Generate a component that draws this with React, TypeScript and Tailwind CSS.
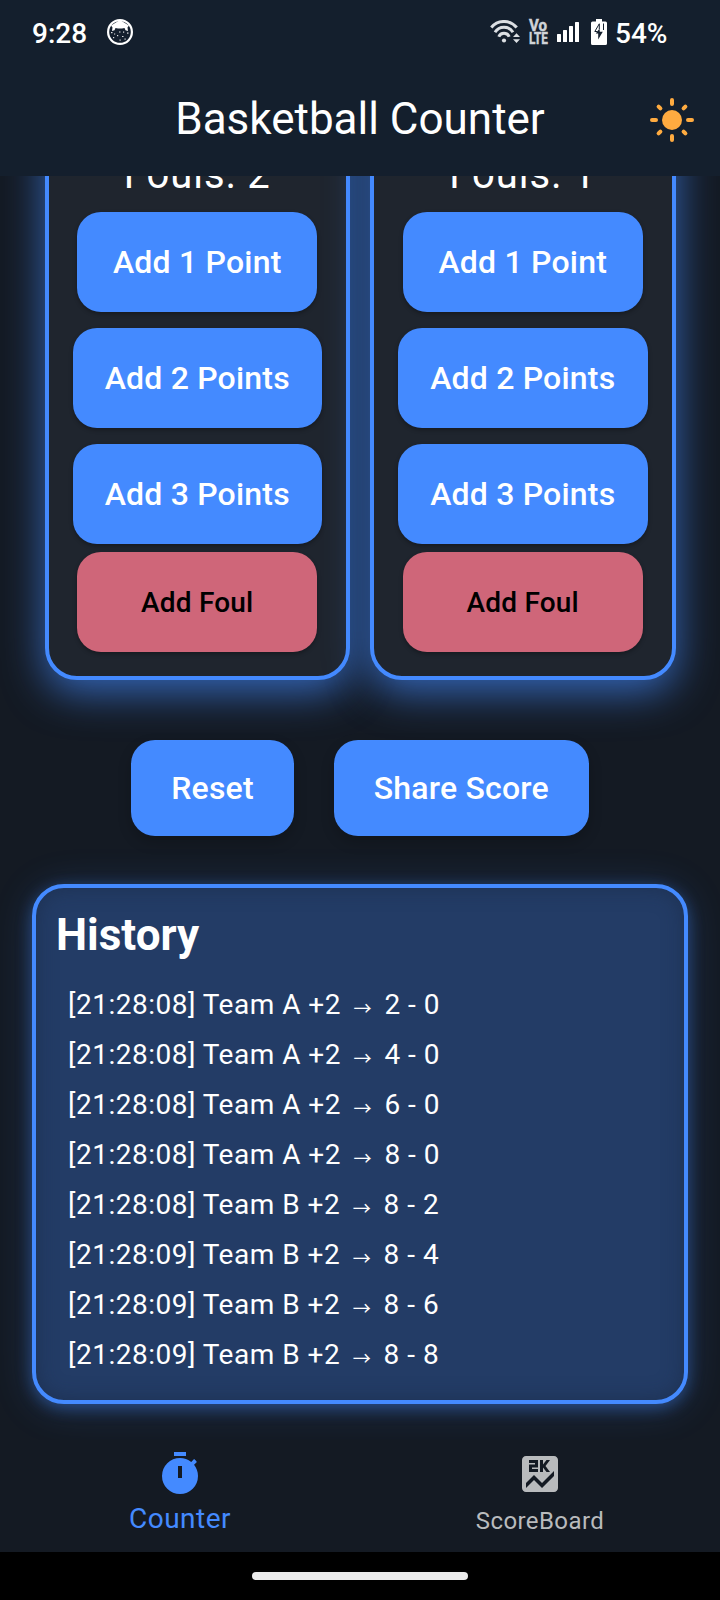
import type { ReactNode } from "react";

const history = [
  ["[21:28:08] Team A +2", "2 - 0"],
  ["[21:28:08] Team A +2", "4 - 0"],
  ["[21:28:08] Team A +2", "6 - 0"],
  ["[21:28:08] Team A +2", "8 - 0"],
  ["[21:28:08] Team B +2", "8 - 2"],
  ["[21:28:09] Team B +2", "8 - 4"],
  ["[21:28:09] Team B +2", "8 - 6"],
  ["[21:28:09] Team B +2", "8 - 8"],
];

function NotificationIcon() {
  return (
    <svg className="ml-[21px] h-[26px] w-[26px]" viewBox="0 0 26 26">
      <circle cx="13" cy="13" r="11.9" fill="none" stroke="#fff" strokeWidth="2.2" />
      <path
        d="M4 6.500 13 1l9 5.500-1.500 2 .5 3.500-2.500-.8-1-2.200-2.500.5h-4l-2.500-.5-1 2.200-2.500.8.5-3.500z"
        fill="#fff"
      />
      <g fill="#fff" fillOpacity=".85">
        <rect x="4" y="13" width="1.500" height="1.200" />
        <rect x="7" y="14.500" width="1.200" height="1" />
        <rect x="12" y="12.500" width="1.500" height="1" />
        <rect x="16" y="12.500" width="1.200" height="1.200" />
        <rect x="20" y="13.500" width="1.500" height="1.200" />
        <rect x="10" y="16" width="1.200" height="1.200" />
        <rect x="15" y="17" width="1.500" height="1" />
        <rect x="6" y="18" width="1.200" height="1.200" />
        <rect x="12.500" y="20.500" width="1.200" height="1.200" />
        <rect x="17.500" y="19.500" width="1.200" height="1.200" />
      </g>
    </svg>
  );
}

function WifiIcon() {
  return (
    <svg className="h-[24px] w-[30px]" viewBox="0 0 30 24">
      <g fill="none" stroke="#dcdfe3" strokeWidth="3">
        <path d="M1.300 7.500a16.400 16.400 0 0 1 25.400 0" />
        <path d="M5 12.200a10.600 10.600 0 0 1 18 0" />
        <path d="M8.800 16.700a5.600 5.600 0 0 1 10.400 0" />
      </g>
      <circle cx="14" cy="20.500" r="2.100" fill="#dcdfe3" />
      <path d="M23 17 26.500 13.200 30 17zM23 19.300h7l-3.500 3.700z" fill="#dcdfe3" />
    </svg>
  );
}

function StatusBar() {
  return (
    <div className="flex h-16 items-center pl-8">
      <span className="w-[54px] pt-[3px] text-[28px] leading-[32px] font-medium">9:28</span>
      <NotificationIcon />
      <div className="ml-auto flex h-[26px] w-[230px] items-center">
        <WifiIcon />
        <svg
          className="ml-[9px] h-[26px] w-[19px] overflow-visible"
          viewBox="0 0 19 26"
          fill="#d0d3d7"
          stroke="#d0d3d7"
          strokeWidth=".5"
          fontSize="16.500"
          fontWeight="700"
        >
          <text x="0" y="12" textLength="18" lengthAdjust="spacingAndGlyphs">
            Vo
          </text>
          <text x="0" y="25.200" textLength="19" lengthAdjust="spacingAndGlyphs">
            LTE
          </text>
        </svg>
        <svg className="ml-[9px] h-5 w-[22px]" viewBox="0 0 22 20" fill="#fff">
          <rect x="0" y="12" width="4" height="8" rx=".5" />
          <rect x="6" y="8" width="4" height="12" rx=".5" />
          <rect x="12" y="4" width="4" height="16" rx=".5" />
          <rect x="18" y="0" width="4" height="20" rx=".5" />
        </svg>
        <svg className="ml-[12px] h-[26px] w-4" viewBox="0 0 16 26">
          <path d="M5 0h6v2.500h3.500A1.500 1.500 0 0 1 16 4v20.500a1.500 1.500 0 0 1-1.500 1.500h-13A1.500 1.500 0 0 1 0 24.500V4a1.500 1.500 0 0 1 1.500-1.500H5z" fill="#fff" />
          <path d="M6.500 12.500H3.800L8.300 4.800V10M12.500 4.500V11" fill="none" stroke="#141f2d" strokeWidth="1" />
          <path d="M8.500 9.500 4.800 14.500H7.200V20.500L11.800 12.700H8.800z" fill="#141f2d" />
        </svg>
        <span className="ml-[8px] pt-[3px] text-[28px] leading-[32px] font-medium">54%</span>
      </div>
    </div>
  );
}

function SunIcon() {
  return (
    <svg className="h-12 w-12" viewBox="-12 -12 24 24" stroke="#ffab40" strokeWidth="2" strokeLinecap="round">
      <circle r="5" fill="#ffab40" stroke="none" />
      <path d="M0-10v2M0 8v2M-10 0h2M8 0h2M-6.700-6.700l.9.9M6.700-6.700l-.9.9M-6.700 6.700l.9-.9M6.700 6.700l-.9-.9" />
    </svg>
  );
}

function PointButton({ wide, children }: { wide?: boolean; children: ReactNode }) {
  return (
    <button
      className={`${wide ? "w-[249.5px]" : "w-[240px]"} h-[100px] shrink-0 rounded-3xl bg-[#448aff] text-[32px] leading-10 font-medium tracking-[0.2px] whitespace-nowrap shadow-[0_2px_4px_rgba(0,0,0,0.3)]`}
    >
      {children}
    </button>
  );
}

function TeamCard({ fouls }: { fouls: number }) {
  return (
    <section className="flex h-[604px] flex-1 flex-col items-center justify-end rounded-[32px] border-4 border-[#448aff] bg-[#1f252e] pb-6 shadow-[0_12px_42px_rgba(68,138,255,0.68)]">
      <div className="mb-[13px] text-[40px] leading-[48px] tracking-[1px]">Fouls: {fouls}</div>
      <div className="flex flex-col items-center gap-4">
        <PointButton>Add 1 Point</PointButton>
        <PointButton wide>Add 2 Points</PointButton>
        <PointButton wide>Add 3 Points</PointButton>
      </div>
      <button className="mt-2 h-[100px] w-[240px] shrink-0 rounded-3xl bg-[#cf6679] pt-[2px] text-[28px] font-medium tracking-[0.2px] text-black shadow-[0_2px_4px_rgba(0,0,0,0.3)]">
        Add Foul
      </button>
    </section>
  );
}

export default function App() {
  return (
    <div className="flex h-[1600px] w-[720px] flex-col overflow-hidden bg-[#141a23] font-['Roboto',sans-serif] text-white">
      <header className="h-44 shrink-0 bg-[#141f2d]">
        <StatusBar />
        <div className="grid h-28 grid-cols-[96px_1fr_96px] items-center">
          <span />
          <h1 className="pb-[2px] text-center text-[44px] leading-[52px] whitespace-nowrap">Basketball Counter</h1>
          <button className="flex justify-center">
            <SunIcon />
          </button>
        </div>
      </header>

      <main className="h-[1264px] shrink-0 overflow-hidden">
        <div className="mx-[44.5px] -mt-[100px] flex gap-5">
          <TeamCard fouls={2} />
          <TeamCard fouls={1} />
        </div>

        <div className="mt-[60px] flex justify-center gap-[39.5px] text-[32px] font-medium tracking-[0.2px]">
          <button className="h-24 w-[163px] rounded-3xl bg-[#448aff] shadow-[0_6px_14px_rgba(0,0,0,0.2)]">Reset</button>
          <button className="h-24 w-[255.5px] rounded-3xl bg-[#448aff] shadow-[0_6px_14px_rgba(0,0,0,0.2)]">
            Share Score
          </button>
        </div>

        <section className="mx-8 mt-12 h-[520px] rounded-[32px] border-4 border-[#448aff] bg-[#233c66] pl-5 shadow-[0_4px_16px_rgba(68,138,255,0.4),0_4px_40px_rgba(68,138,255,0.2),inset_0_0_20px_rgba(24,38,62,0.5)]">
          <h2 className="mt-[21px] text-[44px] leading-[52px] font-bold">History</h2>
          <ul className="mt-[19px] pl-3">
            {history.map(([event, score], index) => (
              <li key={index} className="flex h-[50px] items-baseline pt-[8px] text-[28px] leading-[34px] tracking-[0.5px] whitespace-pre">
                <span>{event} </span>
                <span className="w-[28.5px] translate-y-[1px] text-center font-['Noto_Sans_CJK_JP',sans-serif] text-[18px] leading-none">
                  →
                </span>
                <span> {score}</span>
              </li>
            ))}
          </ul>
        </section>
      </main>

      <nav className="grid h-28 shrink-0 grid-cols-2 bg-[#141a23]">
        <button className="flex flex-col items-center pt-2.5 text-[#448aff]">
          <svg className="h-12 w-12" viewBox="0 0 24 24" fill="currentColor">
            <path d="M19.030 7.390 20.450 5.970C20 5.460 19.550 5 19.040 4.560L17.620 6A9 9 0 0 0 12 4a9 9 0 1 0 9 9c0-2.120-.74-4.070-1.970-5.610zM13 14h-2V8h2zM15 1H9v2h6z" />
          </svg>
          <span className="mt-[4px] text-[28px] leading-[33px] tracking-[0.5px]">Counter</span>
        </button>
        <button className="flex flex-col items-center pt-2.5 text-[#b9bbbd]">
          <svg className="h-12 w-12" viewBox="0 0 24 24" fill="currentColor">
            <path d="M19 3H5c-1.100 0-2 .9-2 2v14c0 1.100.9 2 2 2h14c1.100 0 2-.9 2-2V5c0-1.100-.9-2-2-2zm-7 2h1.500v2.250L15.250 5H17l-2.250 3L17 11h-1.750L13.500 8.750V11H12V5zM6.500 5H11v3.750H8v.75h3V11H6.500V7.250h3V6.500h-3V5zM19 13l-6 6-4-4-4 4v-2.500l4-4 4 4 6-6V13z" />
          </svg>
          <span className="mt-[9px] text-[24px] leading-[28px] tracking-[0.4px]">ScoreBoard</span>
        </button>
      </nav>

      <div className="flex h-12 shrink-0 justify-center bg-black pt-5">
        <div className="h-2 w-[216px] rounded-full bg-[#ebebeb]" />
      </div>
    </div>
  );
}
